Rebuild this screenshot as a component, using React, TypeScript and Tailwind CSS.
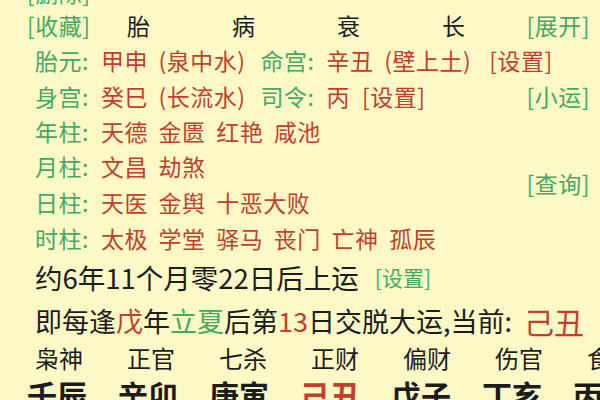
const G = "text-[#45a863]";
const R = "text-[#c23f2e]";

const shensha = [
  { label: "年柱", items: ["天德", "金匮", "红艳", "咸池"] },
  { label: "月柱", items: ["文昌", "劫煞"] },
];

const shishen = ["枭神", "正官", "七杀", "正财", "偏财", "伤官", "食神"];
const dayun = ["壬辰", "辛卯", "庚寅", "己丑", "戊子", "丁亥", "丙戌"];

function Tag({ text, className }: { text: string; className: string }) {
  return <span className={className}>[{text}]</span>;
}

export default function App() {
  return (
    <div
      className="w-[600px] h-[400px] overflow-hidden bg-[#fcf9c7] text-[#1c1c1c]"
      style={{ fontFamily: '"Noto Sans CJK SC", "Noto Sans", sans-serif' }}
    >
      <div className="flex flex-col text-[23px] tracking-[0.5px] [word-spacing:5px]">
        {/* clipped top row */}
        <div className="h-[31px] mt-[-23px] pl-[27px] flex items-center">
          <Tag text="删除" className={G} />
        </div>

        {/* header: 胎 病 衰 长 */}
        <div className="h-[34px] pl-[27px] pr-[10px] flex items-center">
          <div className="w-[100px]">
            <Tag text="收藏" className={G} />
          </div>
          <div className="w-[105px]">胎</div>
          <div className="w-[105px]">病</div>
          <div className="w-[105px]">衰</div>
          <div className="w-[80px]">长</div>
          <div className="ml-auto">
            <Tag text="展开" className={G} />
          </div>
        </div>

        <div className="h-[36px] pl-[35px] flex items-center whitespace-nowrap">
          <span className={G}>胎元:</span>
          <span className={`${R} ml-[12px]`}>甲申 (泉中水)</span>
          <span className={`${G} ml-[15px]`}>命宫:</span>
          <span className={`${R} ml-[12px]`}>辛丑 (壁上土)</span>
          <span className={`${R} ml-[18px]`}>[设置]</span>
        </div>

        <div className="h-[36px] pl-[35px] pr-[10px] flex items-center whitespace-nowrap">
          <span className={G}>身宫:</span>
          <span className={`${R} ml-[12px]`}>癸巳 (长流水)</span>
          <span className={`${G} ml-[15px]`}>司令:</span>
          <span className={`${R} ml-[12px]`}>丙</span>
          <span className={`${R} ml-[12px]`}>[设置]</span>
          <span className={`${G} ml-auto`}>[小运]</span>
        </div>

        {shensha.map((row) => (
          <div key={row.label} className="h-[35px] pl-[35px] flex items-center whitespace-nowrap">
            <span className={G}>{row.label}:</span>
            <span className={`${R} ml-[12px]`}>{row.items.join(" ")}</span>
          </div>
        ))}

        <div className="h-[36px] pl-[35px] pr-[10px] flex items-center whitespace-nowrap">
          <span className={G}>日柱:</span>
          <span className={`${R} ml-[12px]`}>天医 金舆 十恶大败</span>
          <span className={`${G} ml-auto self-start mt-[-18px]`}>[查询]</span>
        </div>

        <div className="h-[36px] pl-[35px] flex items-center whitespace-nowrap">
          <span className={G}>时柱:</span>
          <span className={`${R} ml-[12px]`}>太极 学堂 驿马 丧门 亡神 孤辰</span>
        </div>

        <div className="h-[44px] pl-[35px] flex items-center whitespace-nowrap tracking-normal">
          <span className="text-[27.5px]">约6年11个月零22日后上运</span>
          <span className={`${G} text-[21px] ml-[16px]`}>[设置]</span>
        </div>

        <div className="h-[42px] pl-[35px] flex items-center whitespace-nowrap text-[27px] tracking-normal [word-spacing:0px]">
          <span>即每逢</span>
          <span className={R}>戊</span>
          <span>年</span>
          <span className={G}>立夏</span>
          <span>后第</span>
          <span className={R}>13</span>
          <span>日交脱大运,当前:</span>
          <span className={`${R} text-[30px] ml-[12px]`}>己丑</span>
        </div>

        <div className="h-[32px] pl-[35px] flex items-center whitespace-nowrap text-[24px] tracking-normal">
          {shishen.map((s) => (
            <div key={s} className="w-[92px] shrink-0">
              {s}
            </div>
          ))}
        </div>

        <div className="h-[40px] pl-[27px] flex items-center whitespace-nowrap text-[30px] font-bold tracking-normal">
          {dayun.map((d, i) => (
            <div key={d} className={`w-[91px] shrink-0 ${i === 3 ? R : ""}`}>
              {d}
            </div>
          ))}
        </div>
      </div>
    </div>
  );
}
